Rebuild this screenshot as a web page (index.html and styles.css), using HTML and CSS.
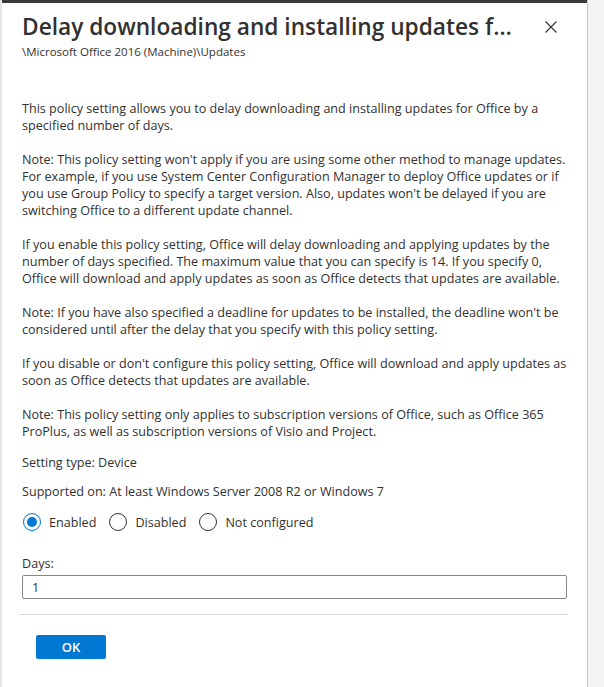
FILE: index.html
```html
<!DOCTYPE html>
<html lang="en">
  <head>
    <meta charset="UTF-8" />
    <meta name="viewport" content="width=device-width, initial-scale=1.0" />
    <title>Policy setting</title>
    <link rel="stylesheet" href="styles.css">
  </head>
  <body>
    <div class="page">
      <div class="panel">
        <div class="header">
          <div class="heading">
            <h1 class="title">Delay downloading and installing updates for Office</h1>
            <div class="path">\Microsoft Office 2016 (Machine)\Updates</div>
          </div>
          <button class="close" aria-label="Close">
            <svg width="12" height="12" viewBox="0 0 12 12">
              <path d="M0.5 0.5 L11.5 11.5 M11.5 0.5 L0.5 11.5" stroke="#323130" stroke-width="1.1" fill="none" />
            </svg>
          </button>
        </div>

        <div class="content">
          <div class="description">
            <p>This policy setting allows you to delay downloading and installing updates for Office by a specified number of days.</p>
            <p>Note: This policy setting won't apply if you are using some other method to manage updates. For example, if you use System Center Configuration Manager to deploy Office updates or if you use Group Policy to specify a target version. Also, updates won't be delayed if you are switching Office to a different update channel.</p>
            <p>If you enable this policy setting, Office will delay downloading and applying updates by the number of days specified. The maximum value that you can specify is 14. If you specify 0, Office will download and apply updates as soon as Office detects that updates are available.</p>
            <p>Note: If you have also specified a deadline for updates to be installed, the deadline won't be considered until after the delay that you specify with this policy setting.</p>
            <p>If you disable or don't configure this policy setting, Office will download and apply updates as soon as Office detects that updates are available.</p>
            <p>Note: This policy setting only applies to subscription versions of Office, such as Office 365 ProPlus, as well as subscription versions of Visio and Project.</p>
          </div>

          <div class="meta">Setting type: Device</div>
          <div class="meta">Supported on: At least Windows Server 2008 R2 or Windows 7</div>

          <div class="options">
            <label class="option"><span class="radio checked"></span>Enabled</label>
            <label class="option"><span class="radio"></span>Disabled</label>
            <label class="option"><span class="radio"></span>Not configured</label>
          </div>

          <div class="field">
            <label class="field-label" for="days">Days:</label>
            <input class="field-input" id="days" type="text" value="1" />
          </div>
        </div>

        <div class="footer">
          <button class="btn-primary">OK</button>
        </div>
      </div>
      <div class="side"></div>
    </div>
  </body>
</html>
```

FILE: styles.css
```css
html, body {
  margin: 0;
  padding: 0;
}
body {
  font-family: "Open Sans", "Noto Sans", Arial, sans-serif;
  color: #323130;
  background-color: #f4f4f4;
}
.page {
  display: flex;
  height: 687px;
  overflow: hidden;
  border-left: 2px solid #e6e6e6;
}
.panel {
  width: 585px;
  flex-shrink: 0;
  background-color: #fff;
  border-top: 3px solid #3b3a39;
  display: flex;
  flex-direction: column;
}
.side {
  flex: 1;
  background-color: #f4f4f4;
  border-left: 1px solid #c8c8c8;
}
.header {
  display: flex;
  align-items: flex-start;
  padding: 8px 20px 0 20px;
}
.heading {
  flex: 1;
  min-width: 0;
}
.title {
  margin: 0;
  font-size: 22.7px;
  font-weight: 600;
  line-height: 32px;
  width: 492px;
  white-space: nowrap;
  overflow: hidden;
  text-overflow: ellipsis;
}
.path {
  font-size: 11.5px;
  line-height: 14px;
  margin-top: 2px;
}
.close {
  border: none;
  background: none;
  padding: 0;
  margin: 9px 9px 0 0;
  width: 14px;
  height: 14px;
  display: flex;
  align-items: center;
  justify-content: center;
}
.content {
  padding: 41px 20px 0 20px;
  font-size: 12.6px;
  line-height: 17px;
}
.description p {
  margin: 0 0 17px 0;
}
.description p:last-child {
  margin-bottom: 14px;
}
.meta {
  margin-bottom: 12px;
}
.options {
  display: flex;
  gap: 12px;
  margin-bottom: 23px;
}
.option {
  display: flex;
  align-items: center;
  gap: 8px;
  height: 20px;
}
.radio {
  width: 18px;
  height: 18px;
  margin-left: 1px;
  border: 1px solid #323130;
  border-radius: 50%;
  box-sizing: border-box;
  position: relative;
}
.radio.checked {
  border-color: #0078d4;
}
.radio.checked::after {
  content: "";
  position: absolute;
  left: 3px;
  top: 3px;
  width: 10px;
  height: 10px;
  border-radius: 50%;
  background-color: #0078d4;
}
.field-label {
  display: block;
  margin-bottom: 3px;
}
.field-input {
  display: block;
  width: 100%;
  box-sizing: border-box;
  height: 24px;
  border: 1px solid #8a8886;
  border-radius: 2px;
  padding: 0 9px;
  font-family: inherit;
  font-size: 12.6px;
  color: #323130;
}
.footer {
  margin: 15px 20px 0 17px;
  border-top: 1px solid #dcdcdc;
  padding: 20px 0 0 17px;
}
.btn-primary {
  width: 70px;
  height: 24px;
  border: none;
  border-radius: 2px;
  background-color: #0078d4;
  color: #fff;
  font-family: inherit;
  font-size: 13px;
  font-weight: 600;
}
```
